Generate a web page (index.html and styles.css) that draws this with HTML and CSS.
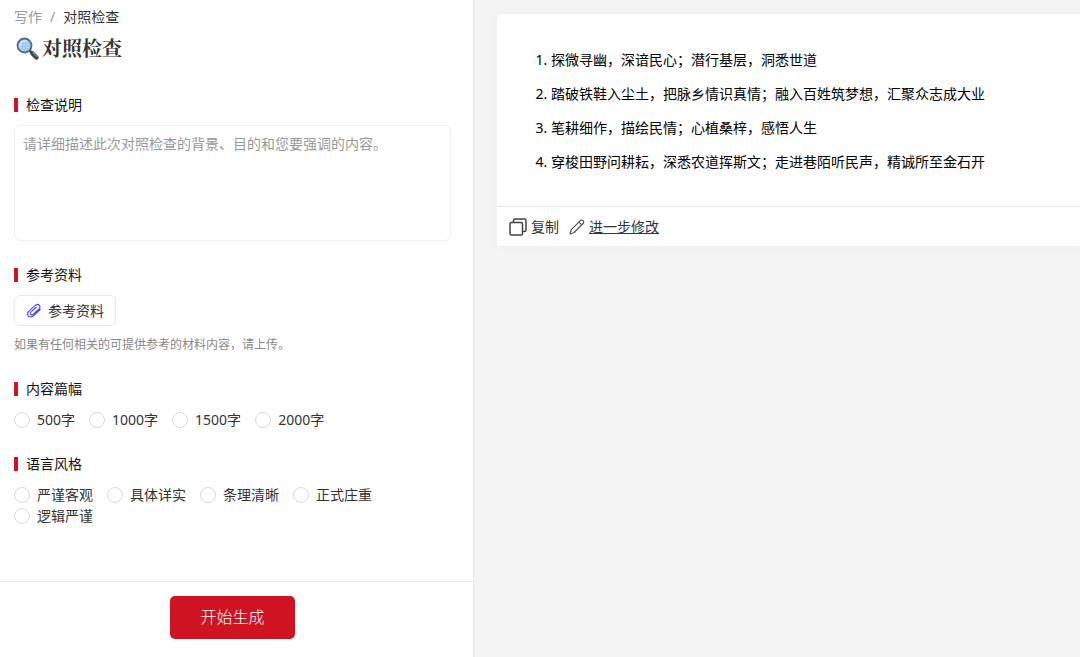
FILE: index.html
```html
<!DOCTYPE html>
<html lang="zh-CN">
<head>
    <meta charset="UTF-8">
    <meta name="viewport" content="width=device-width, initial-scale=1.0">
    <title>对照检查</title>
    <link rel="stylesheet" href="styles.css">
</head>
<body>
    <div class="layout">
        <form class="panel">
            <div class="panel-body">
                <nav class="breadcrumb">
                    <a href="#">写作</a>
                    <span class="separator">/</span>
                    <span class="current">对照检查</span>
                </nav>
                <h1 class="title">
                    <svg class="title-icon" width="24" height="24" viewBox="0 0 24 24" aria-hidden="true">
                        <path d="M13.5 13.5l3 3" stroke="#37474f" stroke-width="2.5"/>
                        <path d="M16.5 16.5l4 4" stroke="#37474f" stroke-width="4.5" stroke-linecap="round"/>
                        <path d="M17 15.5l4 4" stroke="#78909c" stroke-width="1.2" stroke-linecap="round"/>
                        <circle cx="8.5" cy="8.5" r="7" fill="#9fcff5" stroke="#526d79" stroke-width="1.8"/>
                        <path d="M4 9.5a5 5 0 0 1 6-5.5" fill="none" stroke="#c9e7fb" stroke-width="1.6" stroke-linecap="round"/>
                    </svg>
                    对照检查
                </h1>

                <section class="section">
                    <h2 class="section-title"><label for="description">检查说明</label></h2>
                    <textarea class="description" id="description" name="description" placeholder="请详细描述此次对照检查的背景、目的和您要强调的内容。"></textarea>
                </section>

                <section class="section">
                    <h2 class="section-title">参考资料</h2>
                    <button type="button" class="upload">
                        <svg width="16" height="16" viewBox="0 0 16 16" fill="none" stroke="#4b4bf5" stroke-width="1.2" stroke-linecap="round" aria-hidden="true">
                            <path d="M14.200 6.500L7.800 12.500C6 14.200 3.600 14.500 2.300 13.100C1 11.700 1.400 9.600 3.200 7.900L8.600 2.900C10.200 1.500 12.200 1.200 13.300 2.300C14.300 3.300 14.100 4.900 12.700 6.200L7.400 11.100C6.500 12 5.400 12.200 4.700 11.500C4 10.800 4.200 9.700 5.100 8.900L10.200 4.300"/>
                        </svg>
                        参考资料
                    </button>
                    <p class="hint">如果有任何相关的可提供参考的材料内容，请上传。</p>
                </section>

                <section class="section">
                    <h2 class="section-title">内容篇幅</h2>
                    <div class="options">
                        <label class="option"><input type="radio" name="length" value="500">500字</label>
                        <label class="option"><input type="radio" name="length" value="1000">1000字</label>
                        <label class="option"><input type="radio" name="length" value="1500">1500字</label>
                        <label class="option"><input type="radio" name="length" value="2000">2000字</label>
                    </div>
                </section>

                <section class="section">
                    <h2 class="section-title">语言风格</h2>
                    <div class="options">
                        <label class="option"><input type="radio" name="style" value="1">严谨客观</label>
                        <label class="option"><input type="radio" name="style" value="2">具体详实</label>
                        <label class="option"><input type="radio" name="style" value="3">条理清晰</label>
                        <label class="option"><input type="radio" name="style" value="4">正式庄重</label>
                        <label class="option"><input type="radio" name="style" value="5">逻辑严谨</label>
                    </div>
                </section>
            </div>
            <footer class="panel-footer">
                <button type="button" class="generate">开始生成</button>
            </footer>
        </form>

        <main class="result">
            <article class="card">
                <ol class="card-list">
                    <li>探微寻幽，深谙民心；潜行基层，洞悉世道</li>
                    <li>踏破铁鞋入尘土，把脉乡情识真情；融入百姓筑梦想，汇聚众志成大业</li>
                    <li>笔耕细作，描绘民情；心植桑梓，感悟人生</li>
                    <li>穿梭田野问耕耘，深悉农道挥斯文；走进巷陌听民声，精诚所至金石开</li>
                </ol>
                <div class="card-actions">
                    <button type="button" class="action">
                        <svg width="18" height="18" viewBox="0 0 18 18" fill="none" stroke="#444" stroke-width="1.5" stroke-linejoin="round" aria-hidden="true">
                            <rect x="1" y="4.500" width="12.500" height="12.500" rx="1.500"/>
                            <path d="M4.500 4.500V2.500A1.500 1.500 0 0 1 6 1H15.500A1.500 1.500 0 0 1 17 2.500V12A1.500 1.500 0 0 1 15.500 13.500H13.500"/>
                        </svg>
                        复制
                    </button>
                    <a class="action" href="#">
                        <svg width="16" height="16" viewBox="0 0 16 16" fill="none" stroke="#555" stroke-width="1.2" stroke-linejoin="round" aria-hidden="true">
                            <path d="M1 15L2.300 10.700L11.300 1.700C12.100 .900 13.200 .900 14 1.700C14.900 2.500 14.900 3.700 14.100 4.500L5.200 13.500ZM10 3.100L12.700 5.900"/>
                        </svg>
                        <span class="action-link">进一步修改</span>
                    </a>
                </div>
            </article>
        </main>
    </div>
</body>
</html>
```
FILE: styles.css
```css
* {
    box-sizing: border-box;
}

body, h1, h2, p, ol {
    margin: 0;
    padding: 0;
}

body {
    font-family: "Noto Sans", "Noto Sans CJK SC", sans-serif;
    font-size: 14px;
    line-height: 21px;
    color: #333;
    background-color: #f4f4f4;
}

button, textarea {
    font-family: inherit;
    font-size: inherit;
    line-height: inherit;
    color: inherit;
}

svg {
    flex: none;
}

.layout {
    display: grid;
    grid-template-columns: 79fr 101fr;
    min-height: 100vh;
}

/* left side form */
.panel {
    display: flex;
    flex-direction: column;
    min-width: 0;
    background-color: #fff;
    border-right: 1px solid #e8e8e8;
}

.panel-body {
    flex: 1;
    padding: 6px 22px 24px 14px;
}

.breadcrumb {
    display: flex;
    gap: 8px;
}

.breadcrumb a {
    color: #999;
    text-decoration: none;
}

.separator {
    color: #999;
}

.title {
    display: flex;
    align-items: center;
    gap: 2px;
    margin: 8px 0 32px;
    font-family: "Liberation Serif", "Noto Serif CJK SC", "Noto Sans CJK SC", serif;
    font-size: 20px;
    line-height: 28px;
    font-weight: bold;
}

.title-icon {
    margin-left: 2px;
}

.section {
    margin-bottom: 24px;
}

.section-title {
    display: flex;
    align-items: center;
    gap: 8px;
    margin-bottom: 10px;
    font-size: 14px;
    line-height: 20px;
    font-weight: normal;
    color: #111;
}

.section-title::before {
    content: "";
    width: 4px;
    height: 14px;
    background-color: #cf1322;
}

.description {
    display: block;
    width: 100%;
    height: 116px;
    padding: 7px 8px;
    border: 1px solid #f0f0f0;
    border-radius: 6px;
    outline: none;
    resize: none;
}

.description::placeholder {
    color: #999;
}

.upload {
    display: flex;
    align-items: center;
    gap: 6px;
    height: 31px;
    padding: 0 11px;
    line-height: 20px;
    background-color: #fff;
    border: 1px solid #e8e8e8;
    border-radius: 6px;
    cursor: pointer;
}

.hint {
    margin-top: 8px;
    font-size: 12px;
    color: #888;
}

.options {
    display: flex;
    flex-wrap: wrap;
    column-gap: 14px;
    max-width: 380px;
}

.option {
    display: flex;
    align-items: center;
    gap: 7px;
    cursor: pointer;
}

.option input {
    appearance: none;
    width: 16px;
    height: 16px;
    margin: 0;
    border: 1px solid #d9d9d9;
    border-radius: 50%;
    background-color: #fff;
}

.option input:checked {
    border: 4px solid #cf1322;
}

.panel-footer {
    display: flex;
    justify-content: center;
    padding: 14px 22px 18px 14px;
    border-top: 1px solid #e8e8e8;
}

.generate {
    height: 43px;
    padding: 0 30px;
    font-size: 16px;
    font-weight: 300;
    color: #fff;
    background-color: #cf1322;
    border: none;
    border-radius: 5px;
    cursor: pointer;
}

/* right side result */
.result {
    min-width: 0;
    padding: 14px 0 14px 23px;
}

.card {
    background-color: #fff;
    border-top-left-radius: 6px;
    box-shadow: 0 0 12px rgba(0, 0, 0, 0.03);
}

.card-list {
    padding: 29px 24px 27px 54px;
    line-height: 34px;
    color: #000;
}

.card-actions {
    display: flex;
    align-items: center;
    gap: 10px;
    height: 40px;
    padding: 0 12px;
    border-top: 1px solid #e8e8e8;
}

.action {
    display: flex;
    align-items: center;
    gap: 4px;
    padding: 0;
    color: #333;
    background: none;
    border: none;
    text-decoration: none;
    cursor: pointer;
}

.action-link {
    text-decoration: underline;
}
```
